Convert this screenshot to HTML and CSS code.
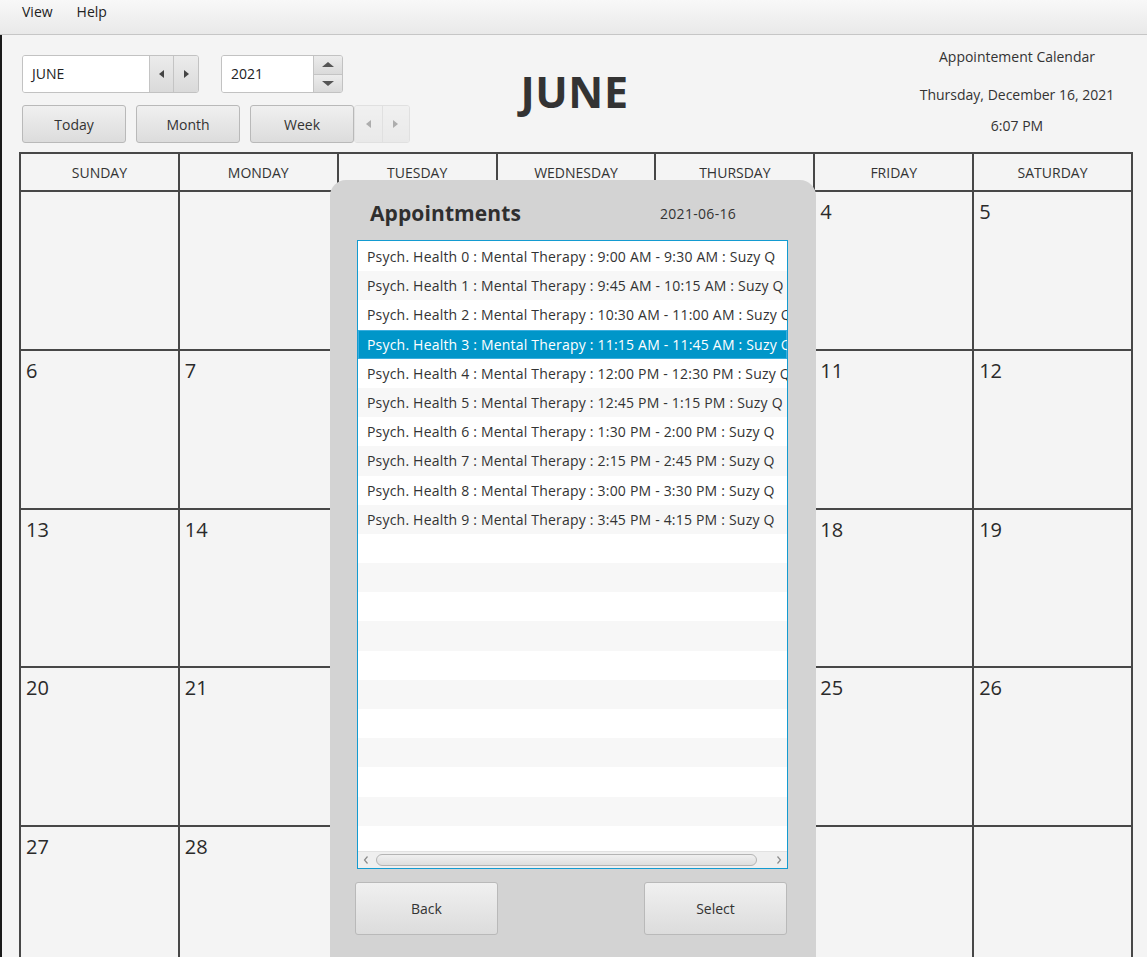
FILE: index.html
```html
<!DOCTYPE html>
<html>
<head>
<meta charset="utf-8">
<link rel="stylesheet" href="styles.css">
</head>
<body>
<div class="menubar">
  <span class="menu-item">View</span>
  <span class="menu-item">Help</span>
</div>
<div class="main">
  <div class="top">
    <div class="controls">
      <div class="ctrl-row">
        <div class="combo">
          <div class="field combo-field">JUNE</div>
          <div class="arrow-btn"><span class="tri tri-left"></span></div>
          <div class="arrow-btn"><span class="tri tri-right"></span></div>
        </div>
        <div class="spinner">
          <div class="field spin-field">2021</div>
          <div class="spin-btns">
            <div class="spin-btn"><span class="tri tri-up"></span></div>
            <div class="spin-btn"><span class="tri tri-down"></span></div>
          </div>
        </div>
      </div>
      <div class="ctrl-row row2">
        <div class="btn view-btn">Today</div>
        <div class="btn view-btn">Month</div>
        <div class="btn view-btn">Week</div>
        <div class="nav-disabled">
          <div class="arrow-btn nav-half"><span class="tri tri-left"></span></div>
          <div class="arrow-btn nav-half"><span class="tri tri-right"></span></div>
        </div>
      </div>
    </div>
    <div class="title">JUNE</div>
    <div class="info">
      <div class="info-app">Appointement Calendar</div>
      <div class="info-date">Thursday, December 16, 2021</div>
      <div class="info-time">6:07 PM</div>
    </div>
  </div>

  <div class="calendar">
    <div class="dow">SUNDAY</div>
    <div class="dow">MONDAY</div>
    <div class="dow">TUESDAY</div>
    <div class="dow">WEDNESDAY</div>
    <div class="dow">THURSDAY</div>
    <div class="dow">FRIDAY</div>
    <div class="dow">SATURDAY</div>

    <div class="day"></div>
    <div class="day"></div>
    <div class="day">1</div>
    <div class="day">2</div>
    <div class="day">3</div>
    <div class="day">4</div>
    <div class="day">5</div>

    <div class="day">6</div>
    <div class="day">7</div>
    <div class="day">8</div>
    <div class="day">9</div>
    <div class="day">10</div>
    <div class="day">11</div>
    <div class="day">12</div>

    <div class="day">13</div>
    <div class="day">14</div>
    <div class="day">15</div>
    <div class="day">16</div>
    <div class="day">17</div>
    <div class="day">18</div>
    <div class="day">19</div>

    <div class="day">20</div>
    <div class="day">21</div>
    <div class="day">22</div>
    <div class="day">23</div>
    <div class="day">24</div>
    <div class="day">25</div>
    <div class="day">26</div>

    <div class="day">27</div>
    <div class="day">28</div>
    <div class="day">29</div>
    <div class="day">30</div>
    <div class="day"></div>
    <div class="day"></div>
    <div class="day"></div>
  </div>

  <div class="popup">
    <div class="popup-head">
      <span class="popup-title">Appointments</span>
      <span class="popup-date">2021-06-16</span>
    </div>
    <div class="list">
      <div class="rows">
        <div class="row">Psych. Health 0 : Mental Therapy : 9:00 AM - 9:30 AM : Suzy Q</div>
        <div class="row">Psych. Health 1 : Mental Therapy : 9:45 AM - 10:15 AM : Suzy Q</div>
        <div class="row">Psych. Health 2 : Mental Therapy : 10:30 AM - 11:00 AM : Suzy Q</div>
        <div class="row selected">Psych. Health 3 : Mental Therapy : 11:15 AM - 11:45 AM : Suzy Q</div>
        <div class="row">Psych. Health 4 : Mental Therapy : 12:00 PM - 12:30 PM : Suzy Q</div>
        <div class="row">Psych. Health 5 : Mental Therapy : 12:45 PM - 1:15 PM : Suzy Q</div>
        <div class="row">Psych. Health 6 : Mental Therapy : 1:30 PM - 2:00 PM : Suzy Q</div>
        <div class="row">Psych. Health 7 : Mental Therapy : 2:15 PM - 2:45 PM : Suzy Q</div>
        <div class="row">Psych. Health 8 : Mental Therapy : 3:00 PM - 3:30 PM : Suzy Q</div>
        <div class="row">Psych. Health 9 : Mental Therapy : 3:45 PM - 4:15 PM : Suzy Q</div>
        <div class="row"></div>
        <div class="row"></div>
        <div class="row"></div>
        <div class="row"></div>
        <div class="row"></div>
        <div class="row"></div>
        <div class="row"></div>
        <div class="row"></div>
        <div class="row"></div>
        <div class="row"></div>
        <div class="row"></div>
        <div class="row"></div>
      </div>
      <div class="hscroll">
        <svg class="chev" width="8" height="10" viewBox="0 0 8 10"><path d="M5.5 1.5 L2.5 5 L5.5 8.5" fill="none" stroke="#8a8a8a" stroke-width="1.2"/></svg>
        <div class="thumb"></div>
        <svg class="chev" width="8" height="10" viewBox="0 0 8 10"><path d="M2.5 1.5 L5.5 5 L2.5 8.5" fill="none" stroke="#8a8a8a" stroke-width="1.2"/></svg>
      </div>
    </div>
    <div class="popup-btns">
      <div class="btn big-btn">Back</div>
      <div class="btn big-btn">Select</div>
    </div>
  </div>
</div>
</body>
</html>
```

FILE: styles.css
```css
html, body {
  margin: 0;
  padding: 0;
}
body {
  width: 1147px;
  height: 957px;
  overflow: hidden;
  background: #f4f4f4;
  font-family: "Open Sans", "Noto Sans", sans-serif;
  color: #333;
  font-size: 14px;
}

.menubar {
  height: 34px;
  border-bottom: 1px solid #c6c6c6;
  background: linear-gradient(#f8f8f8, #e9e9e9);
  display: flex;
  align-items: flex-start;
  padding-left: 22px;
  gap: 24px;
  box-sizing: content-box;
}
.menu-item {
  font-size: 14px;
  line-height: 24px;
  color: #222;
}

.main {
  position: relative;
  border-left: 2px solid #1a1a1a;
  height: 922px;
}

.top {
  height: 117px;
  box-sizing: border-box;
  padding: 12px 20px 0 20px;
  display: grid;
  grid-template-columns: 1fr auto 1fr;
  align-items: start;
}

.controls {
  margin-top: 8px;
  display: flex;
  flex-direction: column;
  gap: 12px;
}
.ctrl-row {
  display: flex;
  height: 38px;
  gap: 22px;
}
.row2 {
  gap: 10px;
}

.field {
  background: #fff;
  box-sizing: border-box;
  height: 38px;
  line-height: 36px;
  padding-left: 9px;
  font-size: 14px;
  color: #222;
}

.combo {
  display: flex;
  width: 177px;
  height: 38px;
  border: 1px solid #c2c2c2;
  border-radius: 3px;
  box-sizing: border-box;
  overflow: hidden;
}
.combo-field {
  width: 127px;
  height: 36px;
  line-height: 36px;
}
.arrow-btn {
  width: 24px;
  display: flex;
  align-items: center;
  justify-content: center;
  background: linear-gradient(#ececec, #dadada);
  border-left: 1px solid #c4c4c4;
}

.spinner {
  display: flex;
  width: 122px;
  height: 38px;
  border: 1px solid #c2c2c2;
  border-radius: 3px;
  box-sizing: border-box;
  overflow: hidden;
}
.spin-field {
  width: 91px;
  height: 36px;
  line-height: 36px;
}
.spin-btns {
  flex: 1;
  display: flex;
  flex-direction: column;
  border-left: 1px solid #c4c4c4;
}
.spin-btn {
  flex: 1;
  display: flex;
  align-items: center;
  justify-content: center;
  background: linear-gradient(#ececec, #dadada);
}
.spin-btn + .spin-btn {
  border-top: 1px solid #c4c4c4;
}

.tri {
  width: 0;
  height: 0;
  display: block;
}
.tri-left {
  border-top: 4px solid transparent;
  border-bottom: 4px solid transparent;
  border-right: 5px solid #444;
}
.tri-right {
  border-top: 4px solid transparent;
  border-bottom: 4px solid transparent;
  border-left: 5px solid #444;
}
.tri-up {
  border-left: 6px solid transparent;
  border-right: 6px solid transparent;
  border-bottom: 5px solid #555;
}
.tri-down {
  border-left: 6px solid transparent;
  border-right: 6px solid transparent;
  border-top: 5px solid #555;
}

.btn {
  box-sizing: border-box;
  border: 1px solid #b9b9b9;
  border-radius: 3px;
  background: linear-gradient(#f0f0f0, #dcdcdc);
  display: flex;
  align-items: center;
  justify-content: center;
  color: #333;
  font-size: 14px;
}
.view-btn {
  width: 104px;
  height: 38px;
}
.nav-disabled {
  display: flex;
  margin-left: -10px;
  height: 38px;
  width: 56px;
  border: 1px solid #c4c4c4;
  border-radius: 3px;
  box-sizing: border-box;
  overflow: hidden;
  opacity: 0.4;
}
.nav-half {
  flex: 1;
}
.nav-half:first-child {
  border-left: none;
}

.title {
  margin-top: 16px;
  font-size: 43px;
  font-weight: 700;
  color: #333;
  line-height: 58px;
  letter-spacing: 0.6px;
}

.info {
  justify-self: end;
  margin-right: -20px;
  width: 260px;
  text-align: center;
  font-size: 14px;
  color: #333;
  line-height: 20px;
}
.info-date {
  margin-top: 18px;
}
.info-time {
  margin-top: 11px;
}

.calendar {
  margin-left: 17px;
  width: 1114px;
  display: grid;
  grid-template-columns: repeat(7, 1fr);
  grid-template-rows: 36px repeat(5, 156.75px);
  gap: 2px;
  padding: 2px;
  box-sizing: border-box;
  background: #474747;
}
.dow {
  background: #f4f4f4;
  display: flex;
  align-items: center;
  justify-content: center;
  font-size: 14px;
  color: #333;
}
.day {
  background: #f4f4f4;
  font-size: 20px;
  line-height: 24px;
  padding: 8px 0 0 5px;
  color: #2a2a2a;
}

.popup {
  position: absolute;
  left: 328px;
  top: 145px;
  width: 486px;
  height: 820px;
  background: #d3d3d3;
  border-radius: 16px;
  box-sizing: border-box;
  padding: 20px 29px 0 25px;
  display: flex;
  flex-direction: column;
}
.popup-head {
  display: flex;
  align-items: center;
  height: 26px;
  margin-bottom: 14px;
  padding-left: 15px;
}
.popup-title {
  font-size: 21px;
  font-weight: 700;
  color: #2f2f2f;
  width: 290px;
  letter-spacing: 0.1px;
}
.popup-date {
  font-size: 14px;
  color: #333;
  letter-spacing: 0.3px;
}

.list {
  margin-left: 2px;
  width: 431px;
  height: 629px;
  box-sizing: border-box;
  border: 1px solid #139bd1;
  background: #fff;
  display: flex;
  flex-direction: column;
  overflow: hidden;
}
.rows {
  flex: 1;
  overflow: hidden;
  padding-top: 1px;
}
.row {
  height: 29.2px;
  line-height: 29px;
  white-space: nowrap;
  padding-left: 9px;
  font-size: 14px;
  letter-spacing: 0.2px;
  color: #333;
  background: #fff;
}
.row:nth-child(even) {
  background: #f7f7f7;
}
.row.selected {
  background: #0096c9;
  color: #fff;
  box-shadow: inset 0 0 0 1px #3aaede;
}

.hscroll {
  height: 16px;
  flex: none;
  background: #efefef;
  border-top: 1px solid #e2e2e2;
  display: flex;
  align-items: center;
  padding: 0 4px;
  gap: 6px;
}
.chev {
  flex: none;
}
.thumb {
  flex: 1;
  height: 10px;
  margin-right: 12px;
  border: 1px solid #b4b4b4;
  border-radius: 6px;
  background: linear-gradient(#f0f0f0, #dedede);
}

.popup-btns {
  margin-top: 13px;
  display: flex;
  justify-content: space-between;
}
.big-btn {
  width: 143px;
  height: 53px;
}
```
